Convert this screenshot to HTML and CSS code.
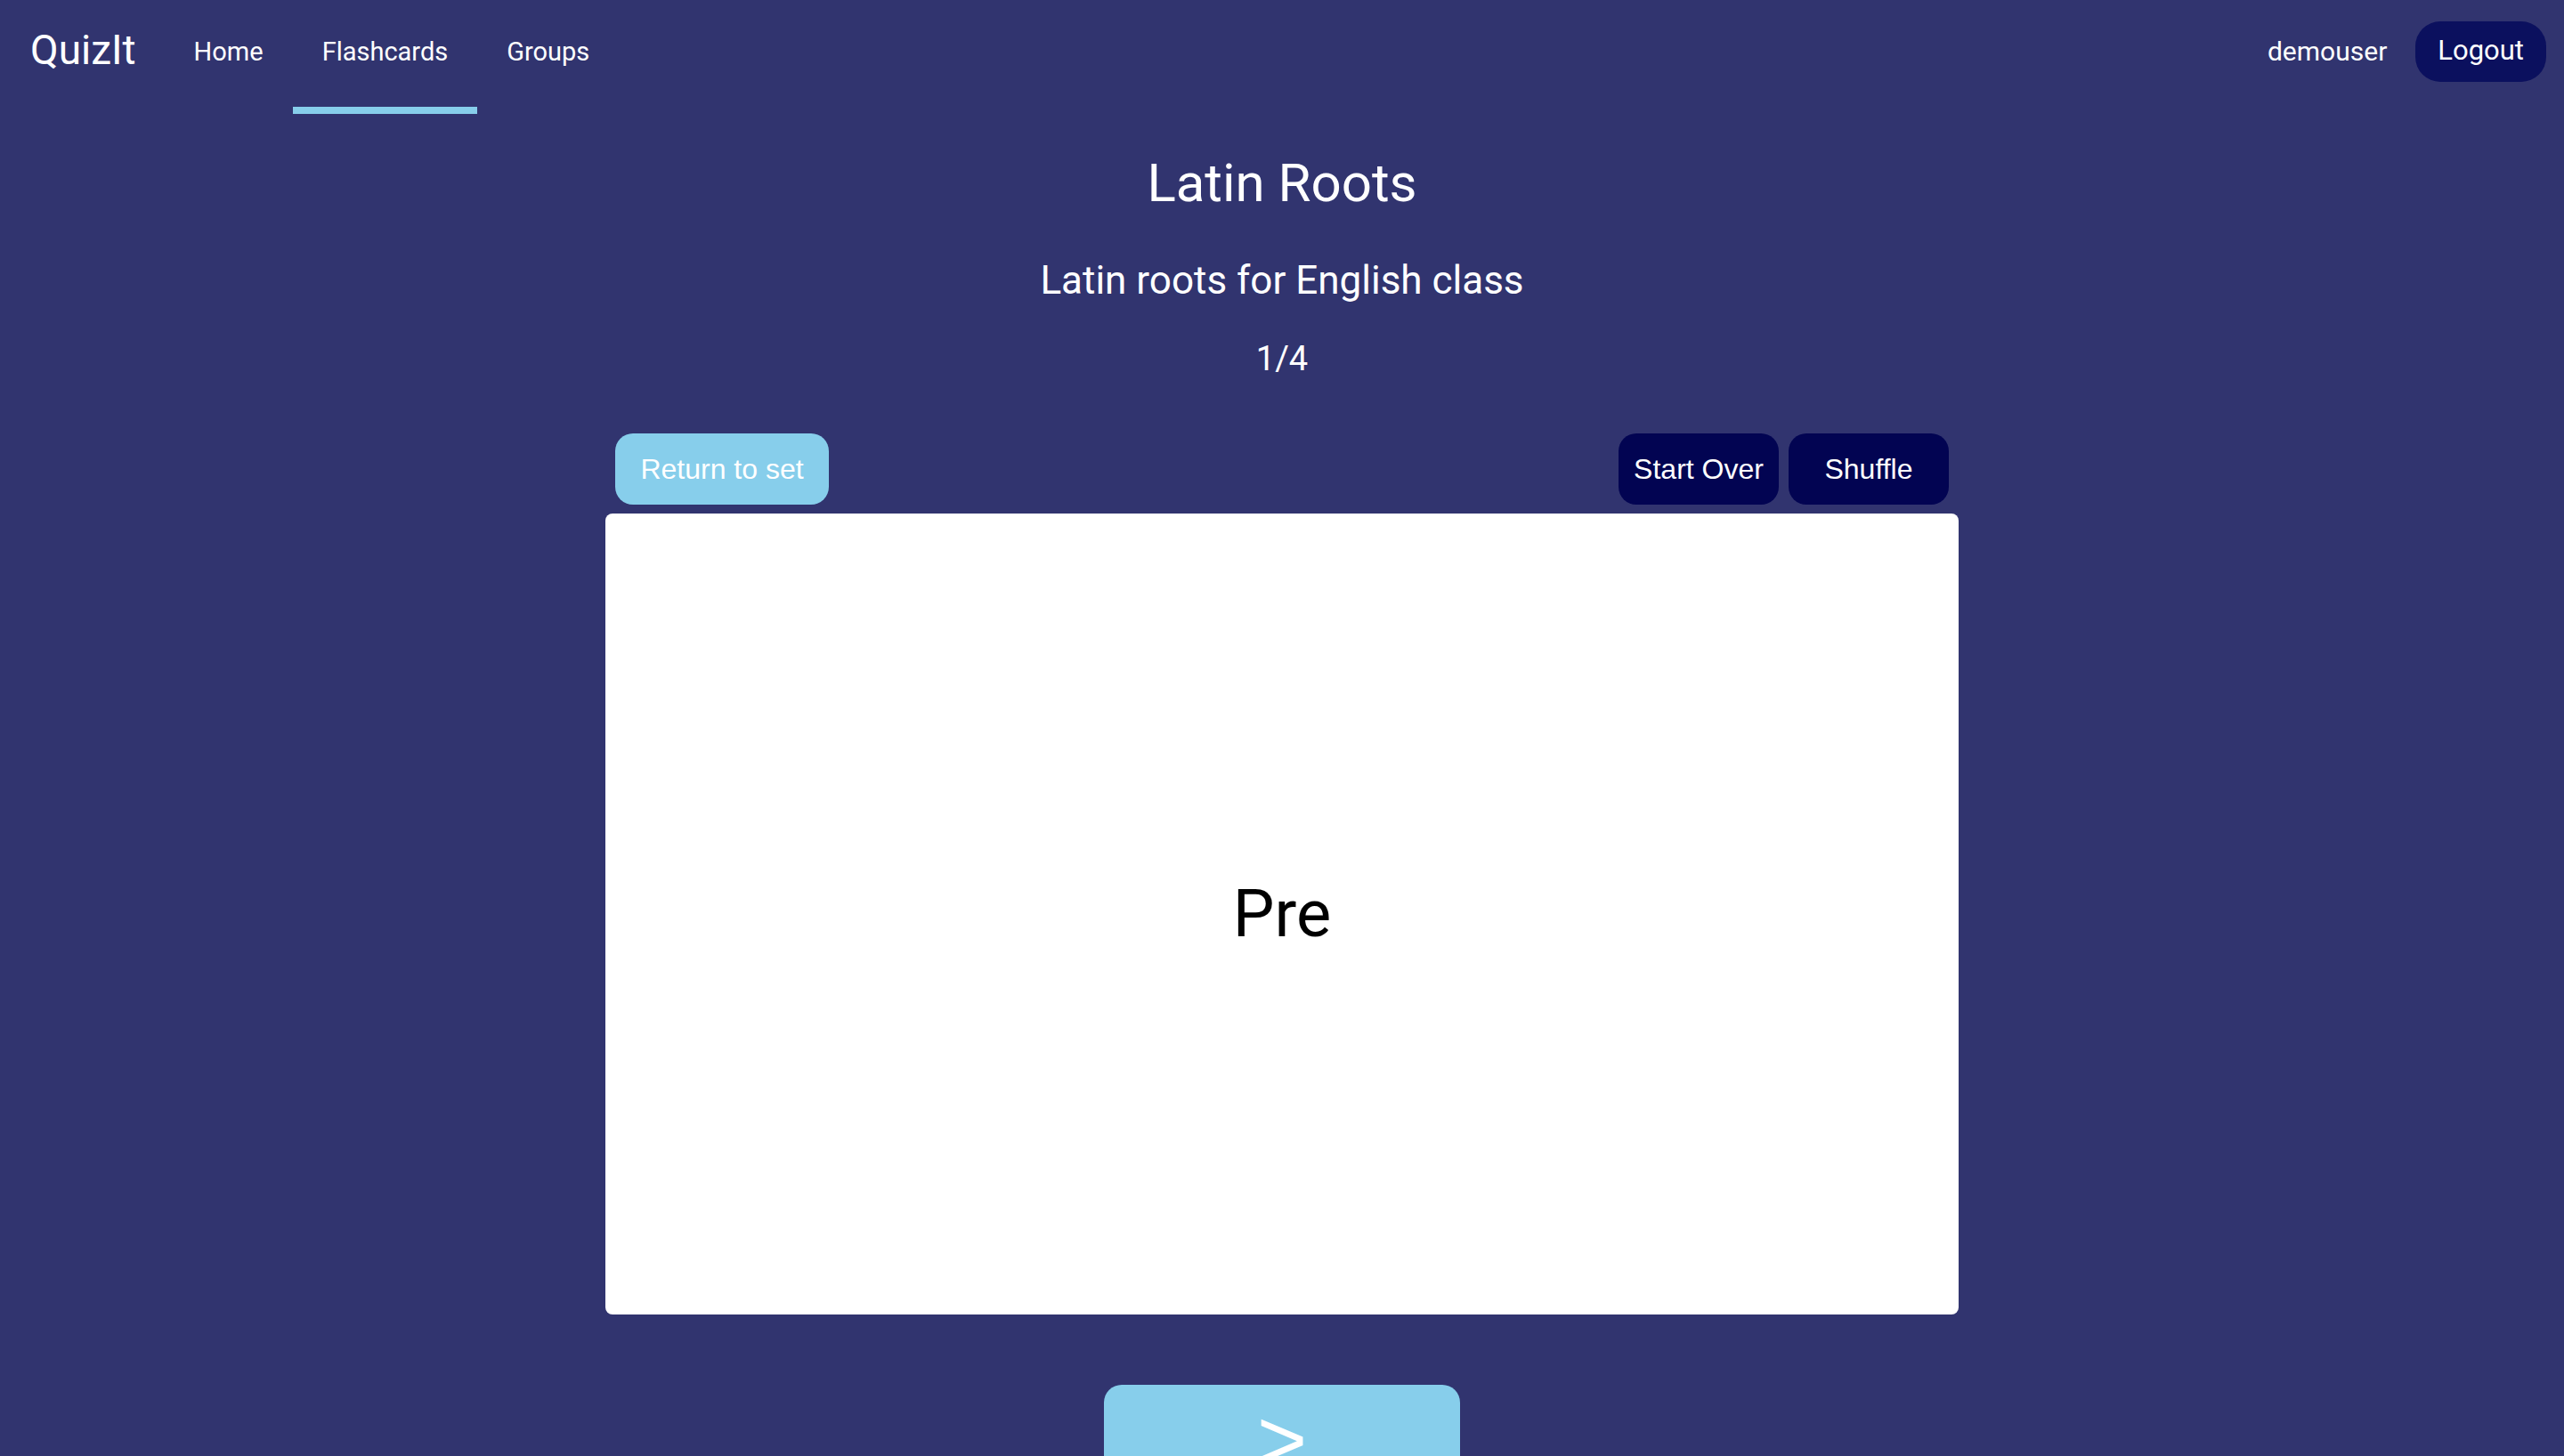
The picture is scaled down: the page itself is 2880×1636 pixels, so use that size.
FILE: index.html
```html
<!DOCTYPE html>
<html lang="en">
<head>
<meta charset="utf-8">
<title>QuizIt - Flashcards</title>
<link rel="stylesheet" href="styles.css">
</head>
<body>
<header class="topbar">
  <a class="logo" href="#">QuizIt</a>
  <nav class="nav">
    <a class="nav-link" href="#">Home</a>
    <a class="nav-link active" href="#">Flashcards</a>
    <a class="nav-link" href="#">Groups</a>
  </nav>
  <div class="user">
    <span class="username">demouser</span>
    <button class="logout">Logout</button>
  </div>
</header>
<main class="study">
  <h1 class="set-title">Latin Roots</h1>
  <h2 class="set-desc">Latin roots for English class</h2>
  <div class="counter">1/4</div>
  <div class="deck">
    <div class="controls">
      <button class="btn btn-light btn-return">Return to set</button>
      <div class="controls-right">
        <button class="btn btn-dark">Start Over</button>
        <button class="btn btn-dark">Shuffle</button>
      </div>
    </div>
    <div class="card">
      <span class="card-text">Pre</span>
    </div>
  </div>
  <button class="next">&gt;</button>
</main>
</body>
</html>
```
FILE: styles.css
```css
html, body {
  margin: 0;
  padding: 0;
  background: #31346f;
  color: #ffffff;
  font-family: Roboto, "Noto Sans", sans-serif;
}

a {
  color: inherit;
  text-decoration: none;
}

.topbar {
  display: flex;
  align-items: flex-start;
  height: 128px;
  padding: 0 20px 0 34px;
}

.logo {
  margin-top: 28px;
  font-size: 46px;
  line-height: 56px;
  margin-right: 32px;
}

.nav {
  display: flex;
  height: 128px;
}

.nav-link {
  box-sizing: border-box;
  height: 128px;
  padding: 38px 33px 42px;
  font-size: 29px;
  line-height: 40px;
  border-bottom: 8px solid transparent;
}

.nav-link.active {
  border-bottom-color: #87ceeb;
}

.user {
  margin-left: auto;
  display: flex;
  align-items: flex-start;
  gap: 32px;
}

.username {
  margin-top: 38px;
  font-size: 30px;
  line-height: 40px;
}

.logout {
  margin-top: 24px;
  height: 68px;
  padding: 13px 25px 15px;
  border: none;
  border-radius: 28px;
  background: #0b105e;
  color: #ffffff;
  font-family: Roboto, "Noto Sans", sans-serif;
  font-size: 31px;
  line-height: 40px;
}

.study {
  display: flex;
  flex-direction: column;
  align-items: center;
}

.set-title {
  margin: 38px 0 0;
  font-size: 60px;
  line-height: 80px;
  font-weight: 400;
}

.set-desc {
  margin: 39px 0 0;
  font-size: 44px;
  line-height: 60px;
  font-weight: 400;
}

.counter {
  margin-top: 33px;
  font-size: 38px;
  line-height: 50px;
}

.deck {
  width: 1520px;
  margin-top: 59px;
}

.controls {
  display: flex;
  justify-content: space-between;
  padding: 0 11px 0 11px;
}

.controls-right {
  display: flex;
  gap: 11px;
}

.btn {
  height: 80px;
  border: none;
  border-radius: 20px;
  color: #ffffff;
  font-family: "Liberation Sans", Arial, sans-serif;
  font-size: 32px;
  padding: 0;
}

.btn-light {
  background: #87ceeb;
}

.btn-return {
  width: 240px;
}

.btn-dark {
  width: 180px;
  background: #020452;
}

.card {
  margin-top: 10px;
  height: 900px;
  background: #ffffff;
  border-radius: 8px;
  display: flex;
  align-items: center;
  justify-content: center;
}

.card-text {
  color: #000000;
  font-size: 74px;
  line-height: 90px;
}

.next {
  margin-top: 79px;
  width: 400px;
  height: 150px;
  padding: 7px 0 0;
  display: flex;
  justify-content: center;
  align-items: flex-start;
  border: none;
  border-radius: 20px;
  background: #87ceeb;
  color: #ffffff;
  font-family: "Liberation Sans", Arial, sans-serif;
  font-size: 96px;
  line-height: normal;
}
```
